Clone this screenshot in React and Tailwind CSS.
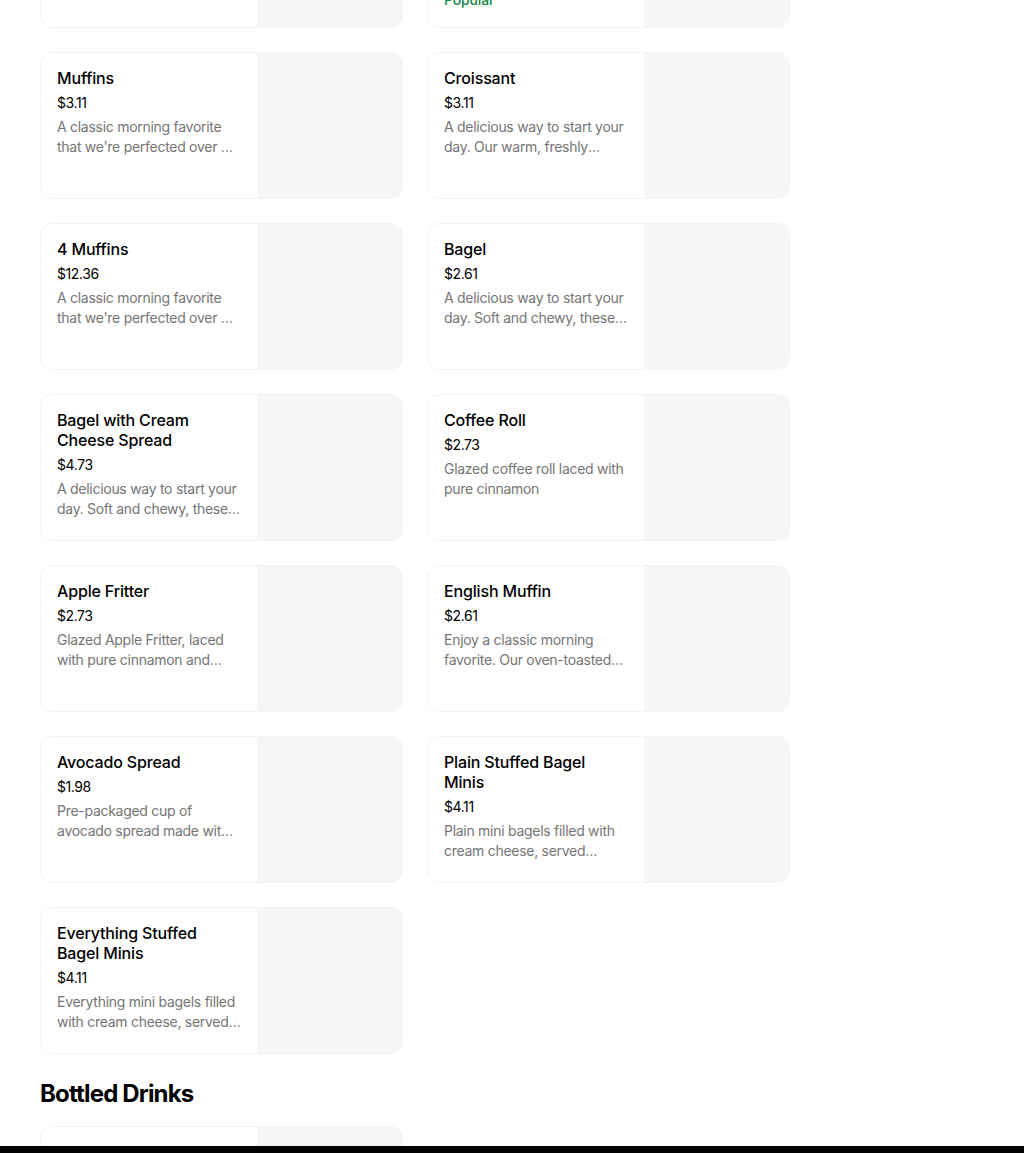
const items = [
  {
    name: "Glazed Donut",
    price: "$1.49",
    desc: "Our signature glazed donut, light and airy with a sweet glaze.",
  },
  {
    name: "Assorted Donuts",
    price: "$1.49",
    desc: "Choose from a variety of freshly made donuts.",
    popular: true,
  },
  {
    name: "Muffins",
    price: "$3.11",
    desc: "A classic morning favorite that we're perfected over 60 years of baking.",
  },
  {
    name: "Croissant",
    price: "$3.11",
    desc: "A delicious way to start your day. Our warm, freshly baked croissant is buttery and flaky.",
  },
  {
    name: "4 Muffins",
    price: "$12.36",
    desc: "A classic morning favorite that we're perfected over 60 years of baking.",
  },
  {
    name: "Bagel",
    price: "$2.61",
    desc: "A delicious way to start your day. Soft and chewy, these bagels are baked fresh.",
  },
  {
    name: "Bagel with Cream Cheese Spread",
    price: "$4.73",
    desc: "A delicious way to start your day. Soft and chewy, these bagels are baked fresh.",
  },
  {
    name: "Coffee Roll",
    price: "$2.73",
    desc: "Glazed coffee roll laced with pure cinnamon",
  },
  {
    name: "Apple Fritter",
    price: "$2.73",
    desc: "Glazed Apple Fritter, laced with pure cinnamon and apple pieces.",
  },
  {
    name: "English Muffin",
    price: "$2.61",
    desc: "Enjoy a classic morning favorite. Our oven-toasted English muffin.",
  },
  {
    name: "Avocado Spread",
    price: "$1.98",
    desc: "Pre-packaged cup of avocado spread made with Hass avocados.",
  },
  {
    name: "Plain Stuffed Bagel Minis",
    price: "$4.11",
    desc: "Plain mini bagels filled with cream cheese, served warm.",
  },
  {
    name: "Everything Stuffed Bagel Minis",
    price: "$4.11",
    desc: "Everything mini bagels filled with cream cheese, served warm.",
  },
];

function ItemCard({ item }) {
  return (
    <div className="flex h-[147px] overflow-hidden rounded-xl border border-[#f3f3f3] bg-white">
      <div className="w-[216px] shrink-0 px-4 pt-[15px]">
        <h3 className="text-base leading-5 font-medium text-black">
          {item.name}
        </h3>
        <p className="mt-[5px] text-sm leading-5 tracking-[-0.03em] text-black">
          {item.price}
        </p>
        <p className="mt-1 line-clamp-2 text-sm leading-5 tracking-[-0.02em] text-[#757575]">
          {item.desc}
        </p>
        {item.popular && (
          <p className="mt-1 text-sm leading-5 font-medium text-[#0e8345]">
            Popular
          </p>
        )}
      </div>
      <div className="flex-1 bg-[#f6f6f6]"></div>
    </div>
  );
}

export default function App() {
  return (
    <div className="relative h-[1153px] overflow-hidden bg-white font-['Inter','Liberation_Sans',sans-serif] tracking-[-0.01em]">
      <div className="-mt-[119px] px-10">
        <div className="grid w-[750px] grid-cols-2 gap-6">
          {items.map((item) => (
            <ItemCard key={item.name} item={item} />
          ))}
        </div>

        <h2 className="mt-6 mb-4 text-2xl leading-8 font-bold tracking-[-0.035em] text-black">
          Bottled Drinks
        </h2>
        <div className="grid w-[750px] grid-cols-2 gap-6">
          <ItemCard
            item={{
              name: "Bottled Water",
              price: "$2.29",
              desc: "Refreshing bottled water.",
            }}
          />
        </div>
      </div>

      {/* bottom bar */}
      <div className="absolute right-0 bottom-0 left-0 h-[7px] bg-black"></div>
    </div>
  );
}
